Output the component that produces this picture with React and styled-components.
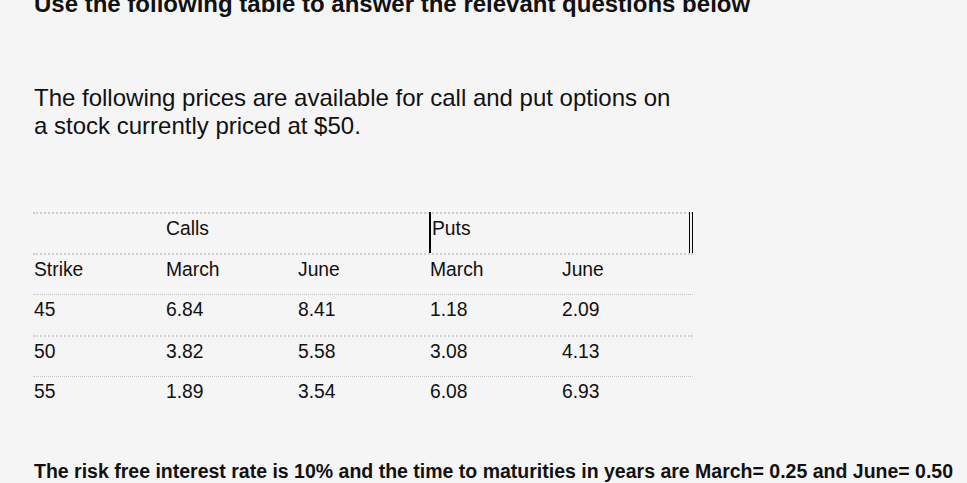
import React from 'react';
import styled, { createGlobalStyle } from 'styled-components';

const GlobalStyle = createGlobalStyle`
  html, body {
    margin: 0;
    padding: 0;
    background: #f5f5f5;
    overflow: hidden;
  }
  body {
    font-family: "Liberation Sans", Arial, sans-serif;
    color: #111;
  }
`;

const Page = styled.div`
  padding: 0 0 0 33px;
  width: 967px;
  height: 483px;
  box-sizing: border-box;
  overflow: hidden;
`;

const Heading = styled.h2`
  margin: -10px 0 0 1px;
  font-size: 24px;
  line-height: 27px;
  font-weight: 700;
  white-space: nowrap;
`;

const Intro = styled.p`
  margin: 67px 0 0 1px;
  width: 650px;
  font-size: 24px;
  line-height: 28px;
`;

const Table = styled.div`
  margin-top: 72px;
  width: 660px;
`;

const Row = styled.div`
  display: grid;
  grid-template-columns: repeat(5, 132px);
  height: 41px;
  box-sizing: border-box;
  border-top: ${(p) => (p.thin ? '1px dotted #c4c4c4' : '2px dotted #cfcfcf')};
`;

const Cell = styled.div`
  padding: 4px 1px 0;
  font-size: 19.3px;
  line-height: 22px;
`;

const PutsCell = styled(Cell)`
  grid-column: span 2;
  margin-top: -2px;
  padding-top: 6px;
  border-left: 2px solid #000;
  border-right: 4px double #000;
`;

const Note = styled.p`
  margin: 43px 0 0 1px;
  font-size: 19.5px;
  line-height: 22px;
  font-weight: 700;
  white-space: nowrap;
`;

const rows = [
  { strike: '45', values: ['6.84', '8.41', '1.18', '2.09'], thin: true },
  { strike: '50', values: ['3.82', '5.58', '3.08', '4.13'], thin: false },
  { strike: '55', values: ['1.89', '3.54', '6.08', '6.93'], thin: true },
];

const App = () => (
  <>
    <GlobalStyle />
    <Page>
      <Heading>Use the following table to answer the relevant questions below</Heading>
      <Intro>
        The following prices are available for call and put options on a stock currently priced at $50.
      </Intro>
      <Table>
        <Row>
          <Cell />
          <Cell>Calls</Cell>
          <Cell />
          <PutsCell>Puts</PutsCell>
        </Row>
        <Row>
          <Cell>Strike</Cell>
          <Cell>March</Cell>
          <Cell>June</Cell>
          <Cell>March</Cell>
          <Cell>June</Cell>
        </Row>
        {rows.map((r) => (
          <Row key={r.strike} thin={r.thin}>
            <Cell>{r.strike}</Cell>
            {r.values.map((v, i) => (
              <Cell key={i}>{v}</Cell>
            ))}
          </Row>
        ))}
      </Table>
      <Note>
        The risk free interest rate is 10% and the time to maturities in years are March= 0.25 and June= 0.50
      </Note>
    </Page>
  </>
);

export default App;
